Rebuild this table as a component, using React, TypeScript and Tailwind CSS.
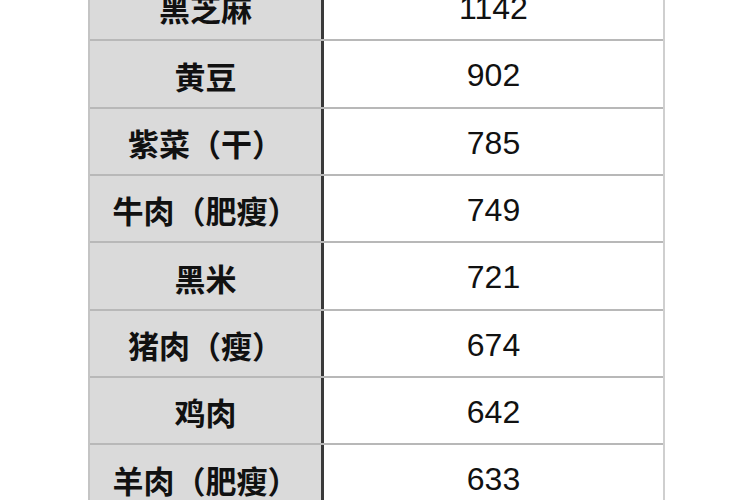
const rows: [string, string][] = [
  ["黑芝麻", "1142"],
  ["黄豆", "902"],
  ["紫菜（干）", "785"],
  ["牛肉（肥瘦）", "749"],
  ["黑米", "721"],
  ["猪肉（瘦）", "674"],
  ["鸡肉", "642"],
  ["羊肉（肥瘦）", "633"],
];

export default function App() {
  return (
    <div className="w-[750px] h-[500px] overflow-hidden bg-white">
      <div className="mt-[-26px] ml-[88px] w-[577px] border-l-2 border-r-2 border-l-[#c4c4c4] border-r-[#cfcfcf]">
        {rows.map(([name, value]) => (
          <div key={name} className="flex h-[67.33px] border-b-2 border-[#b8b8b8]">
            <div
              className="w-[231px] bg-[#dadada] flex items-center justify-center pt-[4px] text-[31px] font-bold text-[#111]"
              style={{ fontFamily: '"Noto Sans CJK SC", "Noto Sans", sans-serif' }}
            >
              {name}
            </div>
            <div className="w-[3px] bg-[#3a3a3a]" />
            <div
              className="flex-1 flex items-center justify-center pt-[3px] text-[32px] text-[#111]"
              style={{ fontFamily: '"Liberation Sans", Arial, sans-serif' }}
            >
              {value}
            </div>
          </div>
        ))}
      </div>
    </div>
  );
}
